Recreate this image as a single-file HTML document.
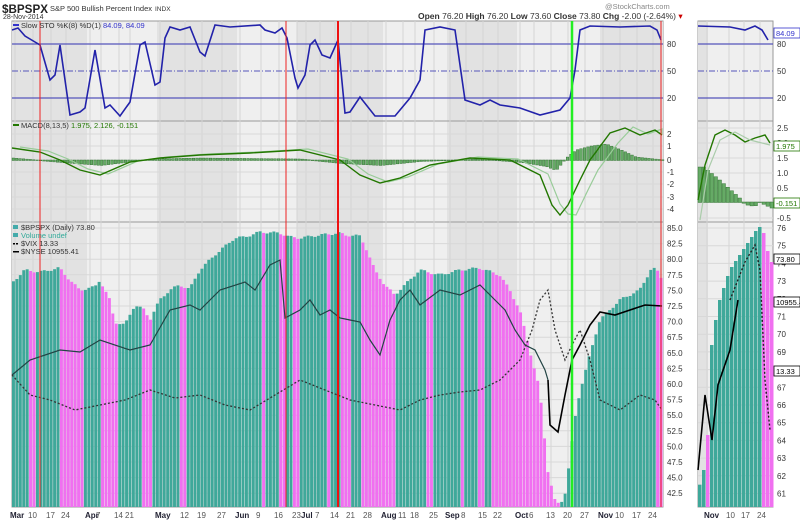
<!DOCTYPE html>
<html><head><meta charset="utf-8"><style>
html,body{margin:0;padding:0;background:#fff;width:800px;height:522px;overflow:hidden}
svg{display:block;font-family:"Liberation Sans",Arial,sans-serif}
</style></head><body>
<svg id="s" width="800" height="522" viewBox="0 0 800 522" xmlns="http://www.w3.org/2000/svg">
<rect width="800" height="522" fill="#fff"/>
<g id="bg"></g>
<g id="bars"></g>
<g id="lines"></g>
<g id="txt" font-size="9" fill="#333">
<text x="2" y="13" font-size="12" font-weight="bold" fill="#222" textLength="46" lengthAdjust="spacingAndGlyphs">$BPSPX</text>
<text x="50" y="11" font-size="7.5">S&amp;P 500 Bullish Percent Index</text>
<text x="155" y="11" font-size="6.5">INDX</text>
<text x="3" y="19" font-size="7">28-Nov-2014</text>
<text x="605" y="9" font-size="7.5" fill="#888">@StockCharts.com</text>
<text x="418" y="19" font-size="8.5"><tspan font-weight="bold">Open</tspan> 76.20 <tspan font-weight="bold">High</tspan> 76.20 <tspan font-weight="bold">Low</tspan> 73.60 <tspan font-weight="bold">Close</tspan> 73.80 <tspan font-weight="bold">Chg</tspan> -2.00 (-2.64%) <tspan fill="#c00">▾</tspan></text>
<text x="21" y="28" font-size="7.5">Slow STO %K(8) %D(1) <tspan fill="#33c">84.09, 84.09</tspan></text>
<rect x="13" y="24" width="6" height="2" fill="#33c"/>
<text x="21" y="128" font-size="7.5">MACD(8,13,5) <tspan fill="#270">1.975, 2.126, -0.151</tspan></text>
<rect x="13" y="124" width="6" height="2" fill="#270"/>
<text x="21" y="230" font-size="7.5">$BPSPX (Daily) 73.80</text>
<text x="21" y="238" font-size="7.5" fill="#3a9">Volume undef</text>
<text x="21" y="246" font-size="7.5">$VIX 13.33</text>
<text x="21" y="254" font-size="7.5">$NYSE 10955.41</text>
<rect x="13" y="225" width="5" height="4" fill="#4aa"/><rect x="13" y="233" width="5" height="4" fill="#4aa"/>
<rect x="13" y="243" width="2" height="1.5" fill="#000"/><rect x="16" y="243" width="2" height="1.5" fill="#000"/>
<rect x="13" y="251" width="6" height="1.5" fill="#000"/>
</g>
<g id="ax" font-size="8" fill="#333"></g>
</svg>
<script>
(function(){
var NS="http://www.w3.org/2000/svg";
function el(p,t,a){var e=document.createElementNS(NS,t);for(var k in a)e.setAttribute(k,a[k]);p.appendChild(e);return e;}
function tx(p,x,y,s,a){var e=el(p,"text",Object.assign({x:x,y:y},a||{}));e.textContent=s;return e;}
var bg=document.getElementById("bg"),bars=document.getElementById("bars"),ln=document.getElementById("lines"),ax=document.getElementById("ax");
var L=12,R=663,SL=698,SR=773;
var panels=[[21,121],[121,222],[222,507]];
var months=[12,87,157,237,297,383,447,517,600,663];
[[L,R],[SL,SR]].forEach(function(lr){
 panels.forEach(function(p){el(bg,"rect",{x:lr[0],y:p[0],width:lr[1]-lr[0],height:p[1]-p[0],fill:"#efefef",stroke:"#999","stroke-width":1});});
});
for(var i=0;i<months.length-1;i+=2){(function(i){panels.forEach(function(p){el(bg,"rect",{x:months[i],y:p[0]+.5,width:months[i+1]-months[i],height:p[1]-p[0]-1,fill:"#e2e2e2"});});})(i);}
panels.forEach(function(p){el(bg,"rect",{x:SL,y:p[0]+.5,width:10,height:p[1]-p[0]-1,fill:"#e2e2e2"});});
var xl=[[12,"Mar",1],[30,"10"],[48,"17"],[63,"24"],[87,"Apr",1],[98,"7"],[116,"14"],[127,"21"],[157,"May",1],[182,"12"],[199,"19"],[219,"27"],[237,"Jun",1],[258,"9"],[276,"16"],[294,"23"],[303,"Jul",1],[317,"7"],[332,"14"],[348,"21"],[365,"28"],[383,"Aug",1],[400,"11"],[412,"18"],[431,"25"],[447,"Sep",1],[463,"8"],[480,"15"],[495,"22"],[517,"Oct",1],[531,"6"],[548,"13"],[565,"20"],[582,"27"],[600,"Nov",1],[617,"10"],[634,"17"],[650,"24"]];
xl.forEach(function(d){panels.forEach(function(p){el(bg,"line",{x1:d[0]+3,x2:d[0]+3,y1:p[0],y2:p[1],stroke:"#d4d4d4","stroke-width":1});});
 tx(ax,d[0]-2,518,d[1],d[2]?{"font-weight":"bold",fill:"#223"}:{fill:"#555"});});
[[704,"Nov",1],[726,"10"],[741,"17"],[757,"24"]].forEach(function(d){panels.forEach(function(p){el(bg,"line",{x1:d[0]+3,x2:d[0]+3,y1:p[0],y2:p[1],stroke:"#d4d4d4"});});tx(ax,d[0],518,d[1],d[2]?{"font-weight":"bold",fill:"#223"}:{fill:"#555"});});
for(var k=0;k<18;k++){var y=228+k*15.6;el(bg,"line",{x1:L,x2:R,y1:y,y2:y,stroke:"#d8d8d8"});tx(ax,667,y+3,(85-k*2.5).toFixed(1));}
for(var k=0;k<16;k++){var y=228+k*17.7;el(bg,"line",{x1:SL,x2:SR,y1:y,y2:y,stroke:"#d8d8d8"});tx(ax,777,y+3,String(76-k));}
[[2,134],[1,146],[0,160],[-1,172],[-2,184],[-3,197],[-4,209]].forEach(function(d){el(bg,"line",{x1:L,x2:R,y1:d[1],y2:d[1],stroke:"#d8d8d8"});tx(ax,667,d[1]+3,String(d[0]));});
[["2.5",128],["2.0",143],["1.5",158],["1.0",173],["0.5",188],["0.0",202],["-0.5",218]].forEach(function(d){el(bg,"line",{x1:SL,x2:SR,y1:d[1],y2:d[1],stroke:"#d8d8d8"});tx(ax,777,d[1]+3,d[0]);});
[[44,"80"],[98,"20"]].forEach(function(d){el(bg,"line",{x1:L,x2:R,y1:d[0],y2:d[0],stroke:"#55b","stroke-width":1.2});el(bg,"line",{x1:SL,x2:SR,y1:d[0],y2:d[0],stroke:"#55b","stroke-width":1.2});tx(ax,667,d[0]+3,d[1]);tx(ax,777,d[0]+3,d[1]);});
el(bg,"line",{x1:L,x2:R,y1:71,y2:71,stroke:"#55b","stroke-dasharray":"6,2,1,2"});el(bg,"line",{x1:SL,x2:SR,y1:71,y2:71,stroke:"#55b","stroke-dasharray":"6,2,1,2"});
tx(ax,667,74,"50");tx(ax,777,74,"50");
function interp(pts,x){for(var i=1;i<pts.length;i++)if(x<=pts[i][0]){var a=pts[i-1],b=pts[i];return a[1]+(b[1]-a[1])*(x-a[0])/(b[0]-a[0]);}return pts[pts.length-1][1];}
var tops=[[12,283],[25,270],[40,272],[50,270],[60,268],[70,280],[80,290],[95,287],[100,280],[105,290],[110,300],[115,322],[125,325],[135,305],[145,310],[150,320],[160,300],[170,290],[180,285],[190,289],[200,270],[215,255],[235,238],[245,237],[260,232],[280,233],[290,237],[300,238],[320,235],[340,233],[345,235],[360,236],[365,245],[375,270],[385,285],[395,295],[400,290],[420,270],[440,275],[460,270],[480,268],[500,275],[510,290],[520,310],[530,350],[540,390],[548,470],[555,500],[560,505],[565,495],[570,460],[575,420],[580,392],[590,355],[600,320],[620,300],[640,290],[652,268],[657,270],[663,280]];
var n=190,bw=(R-L)/n,prev=null;
for(var i=0;i<n;i++){var x=L+i*bw,y=interp(tops,x+bw/2)+Math.sin(i*1.3)*1.2;var c=(prev!==null&&y>prev+0.9)?"#f070f0":"#3fa89a";
 el(bars,"rect",{x:x.toFixed(2),y:y.toFixed(1),width:(bw-0.5).toFixed(2),height:(507-y).toFixed(1),fill:c});prev=y;}
var stop=[[698,492],[704,470],[708,435],[712,345],[716,320],[720,300],[730,270],[740,255],[750,240],[758,228],[762,226],[766,240],[770,262],[773,262]];
prev=null;for(var i=0;i<19;i++){var x=SL+i*4,y=interp(stop,x+2);var c=(prev!==null&&y>prev+0.5)||i==2?"#f070f0":"#3fa89a";el(bars,"rect",{x:x,y:y,width:3.5,height:507-y,fill:c});prev=y;}
var hist=[[12,158],[60,162],[100,165],[150,159],[200,158],[300,159],[340,163],[380,165],[420,161],[480,159],[520,162],[545,166],[555,170],[565,158],[575,150],[590,146],[605,144],[620,150],[635,157],[663,160]];
for(var x=L;x<R;x+=3.4){var y=interp(hist,x);el(bars,"rect",{x:x,y:Math.min(y,160),width:2.6,height:Math.abs(y-160)+0.5,fill:"#6a6",stroke:"#262","stroke-width":0.4});}
for(var i=0;i<19;i++){var x=SL+i*4;var y=interp([[698,167],[704,167],[720,180],[740,198],[745,204],[755,206],[760,202],[773,208]],x+2);el(bars,"rect",{x:x,y:Math.min(y,202),width:3.5,height:Math.abs(y-202)+0.5,fill:"#6a6",stroke:"#262","stroke-width":0.4});}
function pl(pts,a){el(ln,"polyline",Object.assign({points:pts.map(function(p){return p.join(",")}).join(" "),fill:"none"},a));}
var m1=[[12,148],[40,152],[60,160],[80,170],[100,175],[130,162],[160,158],[200,155],[250,153],[300,150],[340,160],[360,175],[380,183],[400,178],[430,165],[470,158],[510,160],[540,175],[552,205],[560,215],[568,205],[580,180],[590,160],[610,133],[625,128],[640,135],[655,130],[662,135]];
pl(m1.map(function(p){return [Math.min(p[0]+8,662),p[1]-(p[0]>560&&p[0]<620?-10:1)]}),{stroke:"#9c9","stroke-width":1.2});
pl(m1,{stroke:"#270","stroke-width":1.4});
pl([[698,200],[705,165],[715,135],[725,130],[735,135],[745,142],[755,138],[765,135],[770,143]],{stroke:"#270","stroke-width":1.4});
pl([[700,220],[708,170],[720,140],[735,132],[750,140],[770,145]],{stroke:"#aca","stroke-width":1.2});
var sto=[[12,30],[18,28],[25,36],[35,42],[40,45],[50,80],[55,75],[60,45],[70,115],[80,112],[85,108],[95,50],[105,108],[110,105],[120,116],[130,102],[140,45],[145,42],[155,85],[160,82],[165,38],[170,27],[180,30],[190,27],[200,52],[205,56],[215,25],[230,27],[260,25],[265,30],[275,33],[282,28],[287,38],[295,78],[298,88],[305,75],[310,45],[315,40],[322,55],[330,58],[338,40],[345,113],[350,112],[360,97],[375,116],[395,116],[400,110],[410,98],[420,80],[425,30],[440,27],[455,30],[465,100],[480,105],[490,100],[500,105],[520,108],[540,115],[560,110],[570,98],[575,70],[580,30],[590,26],[620,27],[650,26],[657,30],[661,40]];
pl(sto,{stroke:"#22a","stroke-width":1.6});
pl([[698,26],[730,27],[745,30],[755,26],[762,30],[768,40]],{stroke:"#22a","stroke-width":1.6});
var ny=[[12,375],[30,360],[60,350],[80,352],[100,340],[130,350],[150,345],[170,310],[190,305],[200,310],[210,300],[220,290],[245,282],[255,290],[270,265],[280,260],[285,318],[300,310],[310,300],[320,315],[330,310],[340,318],[350,320],[360,322],[370,340],[380,355],[390,320],[400,300],[410,290],[420,305],[440,290],[460,295],[480,285],[495,300],[505,310],[515,330],[525,345],[535,350],[545,370],[548,380]];
pl(ny,{stroke:"#244","stroke-width":1.2});
pl([[548,380],[550,425],[558,432],[565,395],[572,360],[580,345],[590,325],[600,312],[615,315],[630,310],[645,305],[662,306]],{stroke:"#000","stroke-width":1.6});
var vx=[[12,375],[30,395],[50,400],[75,410],[100,405],[125,400],[150,390],[175,398],[200,395],[225,405],[250,410],[275,395],[300,380],[325,390],[350,400],[375,405],[400,410],[420,400],[440,395],[460,392],[480,390],[500,380],[520,360],[532,330],[540,300],[548,290],[555,330],[565,360],[572,345],[580,330],[590,360],[600,400],[620,410],[640,395],[655,400],[662,410]];
pl(vx,{stroke:"#333","stroke-width":1.3,"stroke-dasharray":"2,2"});
pl([[698,470],[705,395],[712,440],[718,385],[730,350],[738,300]],{stroke:"#000","stroke-width":1.6});
pl([[730,300],[745,262],[755,245],[760,270],[765,380],[770,430]],{stroke:"#222","stroke-width":1.4,"stroke-dasharray":"2,2"});
el(ln,"line",{x1:40,x2:40,y1:21,y2:507,stroke:"#e22","stroke-width":1});
el(ln,"line",{x1:286,x2:286,y1:21,y2:507,stroke:"#e22","stroke-width":1});
el(ln,"line",{x1:338,x2:338,y1:21,y2:507,stroke:"#e11","stroke-width":2});
el(ln,"line",{x1:572,x2:572,y1:21,y2:507,stroke:"#2e2","stroke-width":2.5});
el(ln,"line",{x1:661,x2:661,y1:21,y2:507,stroke:"#e22","stroke-width":1});
[[775,36,"84.09","#33c"],[775,149,"1.975","#270"],[775,206,"-0.151","#270"],[775,262,"73.80","#000"],[775,305,"10955.4","#000"],[775,374,"13.33","#000"]].forEach(function(d){el(ax,"rect",{x:d[0]-1,y:d[1]-8,width:26,height:10,fill:"#fff",stroke:d[3],"stroke-width":0.8});tx(ax,d[0]+1,d[1],d[2],{fill:d[3],"font-size":"7.5"});});
})();
</script>
</body></html>
